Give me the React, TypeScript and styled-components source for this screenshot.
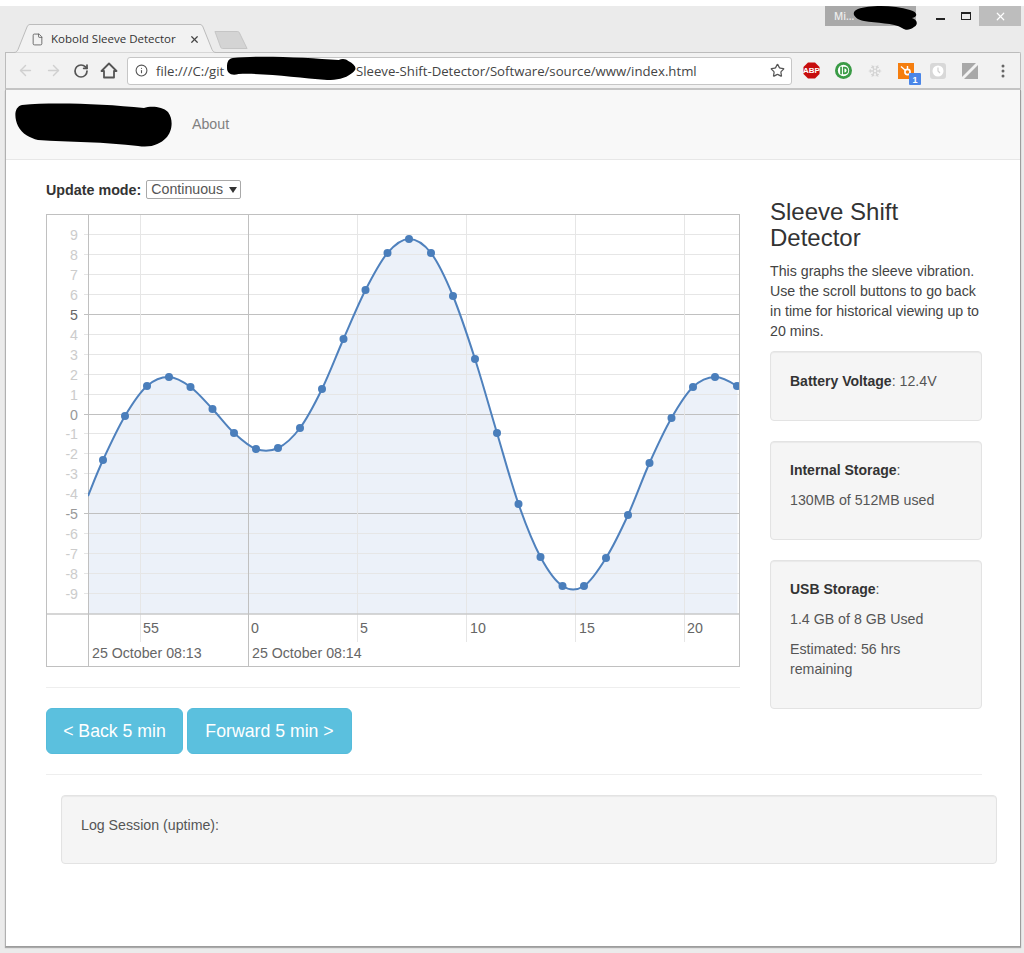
import styled, { createGlobalStyle } from 'styled-components'
import { ArrowLeft, ArrowRight, RotateCw, Info, Star, X, File, Snowflake } from 'lucide-react'

const GlobalStyle = createGlobalStyle`
  html, body { margin: 0; padding: 0; background: #fff; }
  body { font-family: "Liberation Sans", Arial, sans-serif; font-size: 14.2px; line-height: 20px; color: #444; }
  * { box-sizing: border-box; }
  b { font-size: 14px; color: #333; }
`

const Screen = styled.div`
  width: 1024px;
  height: 953px;
  padding-top: 6px;
  overflow: hidden;
`
const Chrome = styled.div`
  height: 947px;
  background: #ebebeb;
  padding-left: 5px;
  padding-right: 3px;
`
const TabStrip = styled.div`
  height: 46px;
  display: flex;
  align-items: flex-start;
  justify-content: space-between;
  position: relative;
`
const TabGroup = styled.div`
  display: flex;
  align-items: flex-start;
  padding: 18px 0 0 8px;
`
const Tab = styled.div`
  position: relative;
  width: 204px;
  height: 29px;
  display: flex;
  align-items: center;
  padding: 1px 0 0 18px;
  font-family: "Open Sans", sans-serif;
  font-size: 11.5px;
  color: #333;
  z-index: 2;
`
const TabShape = styled.svg`
  position: absolute;
  left: 0;
  top: 0;
`
const TabIcon = styled.span`
  position: relative;
  display: flex;
  flex: none;
`
const TabTitle = styled.span`
  position: relative;
  margin-left: 7px;
  width: 138px;
  white-space: nowrap;
`
const NewTab = styled.svg`
  margin: 7px 0 0 -3px;
`
const WindowControls = styled.div`
  display: flex;
  align-items: flex-start;
  height: 20px;
`
const Profile = styled.div`
  width: 91px;
  height: 20px;
  background: #a9a9a9;
  color: #eee;
  font-family: "Open Sans", sans-serif;
  font-size: 10px;
  font-weight: 600;
  line-height: 20px;
  padding-left: 9px;
  margin-right: 11px;
`
const WinButton = styled.div<{ $close?: boolean }>`
  width: ${p => (p.$close ? 42 : 26)}px;
  height: 20px;
  display: flex;
  align-items: center;
  justify-content: center;
  background: ${p => (p.$close ? '#bdbdbd' : 'transparent')};
`
const MinimizeGlyph = styled.span`
  width: 9px;
  height: 2px;
  margin-top: 5px;
  background: #222;
`
const MaximizeGlyph = styled.span`
  width: 10px;
  height: 8px;
  margin-top: -1px;
  border: 1px solid #222;
  border-top-width: 2px;
`
const Blob = styled.svg`
  position: absolute;
  z-index: 5;
`
const ProfileBlob = styled(Blob)`
  right: 99px;
  top: -1px;
`
const UrlBlob = styled(Blob)`
  left: 221px;
  top: 2px;
`
const LogoBlob = styled(Blob)`
  left: 8px;
  top: 13px;
`
const Toolbar = styled.div`
  height: 38px;
  background: #f2f2f2;
  border: 1px solid #bcbcbc;
  border-bottom: 2px solid #c4c4c4;
  border-top-right-radius: 2px;
  display: flex;
  align-items: center;
  padding-left: 5px;
  position: relative;
`
const NavIcon = styled.span<{ $w?: number }>`
  width: ${p => p.$w ?? 28}px;
  flex: none;
  display: flex;
  justify-content: center;
  align-items: center;
`
const AddressBar = styled.div`
  width: 665px;
  height: 28px;
  margin-left: 4px;
  background: #fff;
  border: 1px solid #c6c6c6;
  border-radius: 3px;
  display: flex;
  align-items: center;
  padding: 0 6px 0 7px;
  font-family: "Open Sans", sans-serif;
  font-size: 13.2px;
  color: #444;
  white-space: nowrap;
`
const UrlStart = styled.span`
  margin-left: 8px;
  width: 200px;
`
const UrlEnd = styled.span`
  flex: 1;
`
const HubSvg = styled.svg`
  margin-top: 8px;
`
const Viewport = styled.div`
  height: 857px;
  background: #fff;
  border: 1px solid #9d9d9d;
  border-top: 0;
  border-left-color: #b0b0b0;
  box-shadow: 0 1px 1px #aaa;
`
const Navbar = styled.div`
  height: 70px;
  background: #f8f8f8;
  border-bottom: 1px solid #e7e7e7;
  display: flex;
  align-items: center;
  padding-left: 186px;
  position: relative;
`
const NavLink = styled.a`
  color: #808080;
  margin-top: -2px;
`
const Content = styled.div`
  padding: 20px 24px 0 40px;
`
const Row = styled.div`
  display: flex;
  gap: 30px;
  width: 936px;
`
const MainCol = styled.div`
  width: 694px;
  flex: none;
`
const SideCol = styled.div`
  width: 212px;
  flex: none;
  padding-top: 19px;
`
const ModeRow = styled.div`
  height: 19px;
  display: flex;
  align-items: center;
  gap: 5px;
  margin-bottom: 15px;
  font-size: 14.3px;
  font-weight: bold;
  color: #333;
`
const ModeSelect = styled.div`
  width: 95px;
  height: 19px;
  border: 1px solid #a9a9a9;
  border-radius: 2px;
  background: #fff;
  font-size: 14.2px;
  font-weight: normal;
  line-height: 17px;
  color: #555;
  padding-left: 4px;
  display: flex;
  align-items: center;
  gap: 6px;
`
const SelectCaret = styled.span`
  width: 0;
  height: 0;
  border-left: 4px solid transparent;
  border-right: 4px solid transparent;
  border-top: 6px solid #333;
`
const ChartBox = styled.div`
  height: 453px;
  border: 1px solid #c0c0c0;
  svg { display: block; }
`
const Rule = styled.hr<{ $wide?: boolean }>`
  border: 0;
  border-top: 1px solid #eee;
  margin: 20px 0;
  width: ${p => (p.$wide ? '936px' : 'auto')};
`
const ButtonRow = styled.div`
  display: flex;
  gap: 4px;
`
const ScrollButton = styled.button<{ $w: number }>`
  width: ${p => p.$w}px;
  height: 46px;
  padding: 0;
  border: 1px solid #55bcdb;
  border-radius: 6px;
  background: #5bc0de;
  color: #fff;
  font-family: "Liberation Sans", Arial, sans-serif;
  font-size: 17.7px;
`
const Heading = styled.h3`
  font-size: 24px;
  line-height: 26px;
  font-weight: 500;
  color: #333;
  margin: 0 0 10px;
`
const Lead = styled.p`
  margin: 0 0 10px;
`
const Well = styled.div<{ $height: number; $tight?: boolean }>`
  height: ${p => p.$height}px;
  background: #f5f5f5;
  border: 1px solid #e3e3e3;
  border-radius: 4px;
  padding: ${p => (p.$tight ? 18 : 19)}px 19px 19px;
  margin-bottom: 20px;
  color: #555;
  box-shadow: inset 0 1px 1px rgba(0, 0, 0, .05);
  p { margin: 0 0 10px; }
`
const LogWell = styled(Well)`
  width: 936px;
  margin-left: 15px;
`

const ticks = [9, 8, 7, 6, 5, 4, 3, 2, 1, 0, -1, -2, -3, -4, -5, -6, -7, -8, -9]
const tickY = (v: number) => Math.floor(414 - v * 19.9) + 0.5
const majorX = [88, 248]
const minorX = [140, 357, 466, 575, 684]
const secondLabels = [
  { x: 143, t: '55' }, { x: 251, t: '0' }, { x: 360, t: '5' },
  { x: 470, t: '10' }, { x: 579, t: '15' }, { x: 687, t: '20' },
]
const points: [number, number][] = [
  [103, 460], [125, 416], [147, 386], [169, 377], [190.5, 387], [212.5, 409], [234, 433],
  [256, 449], [278, 448], [300, 428], [322, 389], [343.5, 339], [365.5, 290], [387.5, 253],
  [409, 239], [431, 253], [453, 296], [475, 359], [497, 433], [518.5, 504], [540.5, 557],
  [562.5, 586], [584, 586], [606, 558], [628, 515], [649.5, 463], [671.5, 418], [693, 387],
  [715, 377], [737, 386],
]

// catmull-rom through the samples, close enough to the highstock spline
function splinePath(pts: [number, number][]) {
  let d = `M${pts[0][0]} ${pts[0][1]}`
  for (let i = 0; i < pts.length - 1; i++) {
    const p0 = pts[Math.max(i - 1, 0)]
    const p1 = pts[i]
    const p2 = pts[i + 1]
    const p3 = pts[Math.min(i + 2, pts.length - 1)]
    const c1x = p1[0] + (p2[0] - p0[0]) / 6
    const c1y = p1[1] + (p2[1] - p0[1]) / 6
    const c2x = p2[0] - (p3[0] - p1[0]) / 6
    const c2y = p2[1] - (p3[1] - p1[1]) / 6
    d += ` C${c1x} ${c1y} ${c2x} ${c2y} ${p2[0]} ${p2[1]}`
  }
  return d
}

function Chart() {
  const full: [number, number][] = [[88, 496], ...points, [748, 398]]
  const line = splinePath(full)
  return (
    <svg width={692} height={451} viewBox="47 215 692 451" fontFamily="Liberation Sans, Arial, sans-serif" fontSize={14.2}>
      <defs>
        <clipPath id="fill"><rect x={88} y={215} width={649.5} height={399} /></clipPath>
        <clipPath id="plot"><rect x={88} y={215} width={651} height={399} /></clipPath>
      </defs>
      <g clipPath="url(#fill)">
        <path d={`${line} L748 614 L88 614 Z`} fill="#ecf1f9" />
      </g>
      {ticks.map(v => (
        <line key={v} x1={84} x2={739} y1={tickY(v)} y2={tickY(v)}
          stroke={v % 5 === 0 ? '#c0c0c0' : '#e6e6e6'} />
      ))}
      {minorX.map(x => (
        <line key={x} x1={x + 0.5} x2={x + 0.5} y1={215} y2={642} stroke="#e6e6e6" />
      ))}
      <line x1={47} x2={739} y1={614} y2={614} stroke="#c8c8c8" strokeWidth={1.5} />
      {majorX.map(x => (
        <line key={x} x1={x + 0.5} x2={x + 0.5} y1={215} y2={666} stroke="#c0c0c0" />
      ))}
      {ticks.map(v => (
        <text key={v} x={78} y={tickY(v) + 5.5} textAnchor="end"
          fill={v === 5 ? '#666' : v === 0 || v === -5 ? '#999' : '#ccc'}>{v}</text>
      ))}
      {secondLabels.map(l => (
        <text key={l.t} x={l.x} y={633} fill="#666">{l.t}</text>
      ))}
      <text x={92} y={658} fill="#666">25 October 08:13</text>
      <text x={252} y={658} fill="#666">25 October 08:14</text>
      <g clipPath="url(#plot)">
        <path d={line} fill="none" stroke="#4f81bd" strokeWidth={2} />
        {points.map(([x, y]) => <circle key={x} cx={x} cy={y} r={4} fill="#4a7ebb" />)}
      </g>
    </svg>
  )
}

function HomeIcon() {
  return (
    <svg width={18} height={17} viewBox="0 0 18 17">
      <path d="M9 1.500 1.500 9H4v6.500h10V9h2.500z" fill="none" stroke="#555" strokeWidth={1.8} strokeLinejoin="round" />
    </svg>
  )
}

function AbpIcon() {
  return (
    <svg width={17} height={17} viewBox="0 0 18 18">
      <polygon points="5.3,0.5 12.7,0.5 17.5,5.3 17.5,12.7 12.7,17.5 5.3,17.5 0.5,12.7 0.5,5.3" fill="#c70d0d" />
      <text x={9} y={12} textAnchor="middle" fontFamily="Liberation Sans, sans-serif" fontWeight="bold" fontSize={8.5} fill="#fff">ABP</text>
    </svg>
  )
}

function IdIcon() {
  return (
    <svg width={17} height={17} viewBox="0 0 18 18">
      <circle cx={9} cy={9} r={9} fill="#3a9b46" />
      <circle cx={9} cy={9} r={6} fill="#fff" />
      <rect x={5.5} y={5} width={1.8} height={8} fill="#3a9b46" />
      <path d="M8.400 5H10a4 4 0 0 1 0 8H8.400z" fill="#3a9b46" />
      <path d="M10 7h.2a2 2 0 0 1 0 4H10z" fill="#fff" />
    </svg>
  )
}

function HubIcon() {
  return (
    <HubSvg width={24} height={24} viewBox="0 0 24 24">
      <rect x={0} y={0} width={16} height={16} fill="#f57e0f" />
      <circle cx={9.5} cy={9} r={2.600} fill="none" stroke="#fff" strokeWidth={1.6} />
      <path d="M7.500 7.500 3 3.500M11 11.500l3 3M9.500 6.500V3" stroke="#fff" strokeWidth={1.4} />
      <rect x={11} y={10} width={12} height={12} rx={1} fill="#4a86e8" />
      <text x={17} y={19.5} textAnchor="middle" fontFamily="Liberation Sans, sans-serif" fontWeight="bold" fontSize={9} fill="#fff">1</text>
    </HubSvg>
  )
}

function ClockIcon() {
  return (
    <svg width={16} height={16} viewBox="0 0 16 16">
      <rect width={16} height={16} rx={3} fill="#d8d8d8" />
      <circle cx={8} cy={8} r={5.5} fill="#fff" />
      <path d="M8 4.500V8l2 2" stroke="#d0d0d0" strokeWidth={1.2} fill="none" />
    </svg>
  )
}

function SlashIcon() {
  return (
    <svg width={16} height={16} viewBox="0 0 16 16">
      <path d="M0 0h14L0 14z" fill="#a8a8a8" />
      <path d="M16 2v14H2z" fill="#a8a8a8" />
    </svg>
  )
}

function DotsIcon() {
  return (
    <svg width={4} height={14} viewBox="0 0 4 14">
      <circle cx={2} cy={2} r={1.5} fill="#666" />
      <circle cx={2} cy={7} r={1.5} fill="#666" />
      <circle cx={2} cy={12} r={1.5} fill="#666" />
    </svg>
  )
}

export default function App() {
  return (
    <Screen>
      <GlobalStyle />
      <Chrome>
        <TabStrip>
          <TabGroup>
            <Tab>
              <TabShape width={204} height={29} viewBox="0 0 204 29">
                <path d="M0 28.500h1c2 0 3-1 4-3L14 3c.6-1.500 1.500-2.500 3-2.500h170c1.500 0 2.400 1 3 2.500l9 22.500c1 2 2 3 4 3h1" fill="#f2f2f2" stroke="#bcbcbc" />
              </TabShape>
              <TabIcon><File size={13} color="#555" strokeWidth={1.5} /></TabIcon>
              <TabTitle>Kobold Sleeve Detector</TabTitle>
              <TabIcon><X size={11} color="#444" strokeWidth={2.6} /></TabIcon>
            </Tab>
            <NewTab width={34} height={18} viewBox="0 0 36 18" preserveAspectRatio="none">
              <path d="M1 .5h24c1 0 1.500.5 2 1.500l8 15.500H9c-1 0-1.500-.5-2-1.500z" fill="#d4d4d4" stroke="#c4c4c4" />
            </NewTab>
          </TabGroup>
          <WindowControls>
            <Profile>Mi...</Profile>
            <WinButton><MinimizeGlyph /></WinButton>
            <WinButton><MaximizeGlyph /></WinButton>
            <WinButton $close><X size={13} color="#fff" strokeWidth={2.2} /></WinButton>
          </WindowControls>
          <ProfileBlob width={70} height={26} viewBox="0 0 70 26">
            <path d="M6 4C18 0 42 0 58 5c8 2 8 7 2 8 6 2 6 7 2 9-4 3-8 4-12 1-8-5-26-5-38-7C2 14-2 7 6 4z" fill="#000" />
          </ProfileBlob>
        </TabStrip>
        <Toolbar>
          <NavIcon><ArrowLeft size={17} color="#d0d0d0" strokeWidth={2} /></NavIcon>
          <NavIcon><ArrowRight size={17} color="#d0d0d0" strokeWidth={2} /></NavIcon>
          <NavIcon><RotateCw size={16} color="#555" strokeWidth={2.6} /></NavIcon>
          <NavIcon><HomeIcon /></NavIcon>
          <AddressBar>
            <Info size={13} color="#555" strokeWidth={2} />
            <UrlStart>file:///C:/git</UrlStart>
            <UrlEnd>Sleeve-Shift-Detector/Software/source/www/index.html</UrlEnd>
            <Star size={15} color="#555" strokeWidth={2} />
          </AddressBar>
          <NavIcon $w={38}><AbpIcon /></NavIcon>
          <NavIcon $w={26}><IdIcon /></NavIcon>
          <NavIcon $w={38}><Snowflake size={14} color="#d4d4d4" strokeWidth={2} /></NavIcon>
          <NavIcon $w={32}><HubIcon /></NavIcon>
          <NavIcon $w={24}><ClockIcon /></NavIcon>
          <NavIcon $w={40}><SlashIcon /></NavIcon>
          <NavIcon $w={26}><DotsIcon /></NavIcon>
          <UrlBlob width={129} height={26} viewBox="0 0 134 26" preserveAspectRatio="none">
            <path d="M6 3c30-3 80 0 110 2 4-2 8-1 10 1 8 4 10 8 4 12-8 6-16 7-26 7-30-2-60-7-92-6-8 2-12-1-12-6C0 9 0 4 6 3z" fill="#000" />
          </UrlBlob>
        </Toolbar>
        <Viewport>
          <Navbar>
            <NavLink>About</NavLink>
            <LogoBlob width={158} height={44} viewBox="0 0 158 44">
              <path d="M8 2C40-1 90 1 130 5c6-2 18-2 24 4 6 8 4 20-2 26-6 6-14 10-28 8-32-4-70-4-100-6-8-2-16-6-20-14C0 14 0 4 8 2z" fill="#000" />
            </LogoBlob>
          </Navbar>
          <Content>
            <Row>
              <MainCol>
                <ModeRow>
                  Update mode:
                  <ModeSelect>Continuous<SelectCaret /></ModeSelect>
                </ModeRow>
                <ChartBox><Chart /></ChartBox>
                <Rule />
                <ButtonRow>
                  <ScrollButton $w={137}>&lt; Back 5 min</ScrollButton>
                  <ScrollButton $w={165}>Forward 5 min &gt;</ScrollButton>
                </ButtonRow>
              </MainCol>
              <SideCol>
                <Heading>Sleeve Shift Detector</Heading>
                <Lead>This graphs the sleeve vibration. Use the scroll buttons to go back in time for historical viewing up to 20 mins.</Lead>
                <Well $height={70}><p><b>Battery Voltage</b>: 12.4V</p></Well>
                <Well $height={99} $tight><p><b>Internal Storage</b>:</p><p>130MB of 512MB used</p></Well>
                <Well $height={149} $tight>
                  <p><b>USB Storage</b>:</p>
                  <p>1.4 GB of 8 GB Used</p>
                  <p>Estimated: 56 hrs remaining</p>
                </Well>
              </SideCol>
            </Row>
            <Rule $wide />
            <LogWell $height={69}><p>Log Session (uptime):</p></LogWell>
          </Content>
        </Viewport>
      </Chrome>
    </Screen>
  )
}
